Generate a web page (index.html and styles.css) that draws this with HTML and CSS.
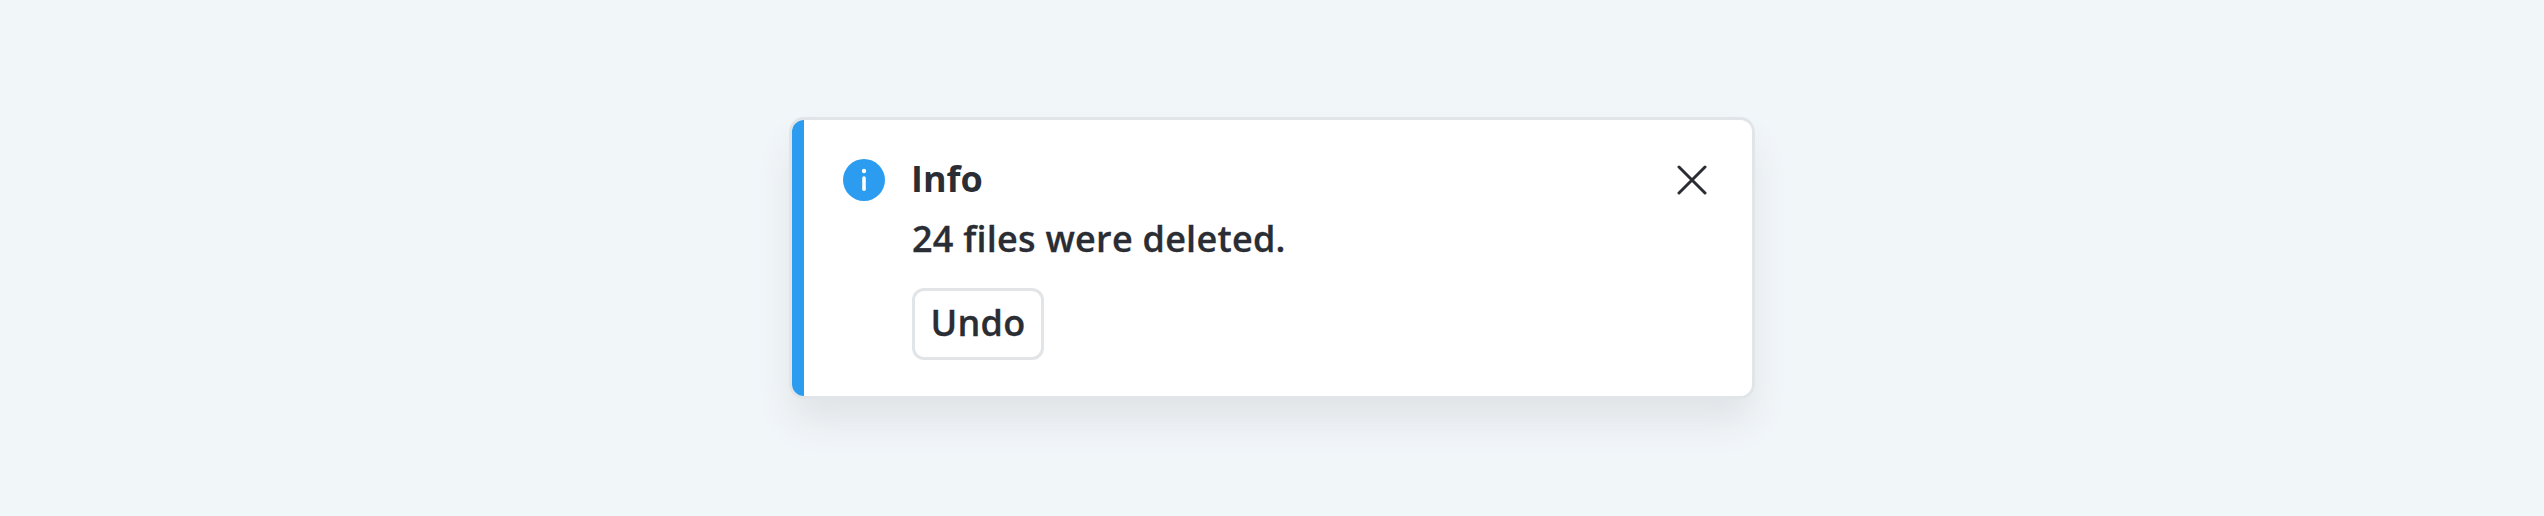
FILE: index.html
```html
<!DOCTYPE html>
<html lang="en">
<head>
<meta charset="utf-8">
<title>Info toast</title>
<link rel="stylesheet" href="styles.css">
</head>
<body>
<section class="toast" role="status">
  <svg class="toast-icon" viewBox="0 0 42 42" aria-hidden="true">
    <circle cx="21" cy="21" r="21" fill="#2c9cf0"/>
    <circle cx="21" cy="12" r="2.2" fill="#fff"/>
    <path d="M21 19V30.2" stroke="#fff" stroke-width="3.6" stroke-linecap="round"/>
  </svg>
  <div class="toast-content">
    <h1 class="toast-title">Info</h1>
    <p class="toast-message">24 files were deleted.</p>
    <button class="toast-action" type="button">Undo</button>
  </div>
  <button class="toast-close" type="button" aria-label="Close">
    <svg class="close-icon" viewBox="0 0 30 30" aria-hidden="true">
      <path d="M2 2L28 28M28 2L2 28" stroke="#2a2d34" stroke-width="3" stroke-linecap="round"/>
    </svg>
  </button>
</section>
</body>
</html>
```
FILE: styles.css
```css
* { box-sizing: border-box; }
html { overflow: hidden; }
body {
  margin: 0;
  height: 516px;
  display: flex;
  justify-content: center;
  align-items: center;
  background: #f1f6f9;
  color: #2a2d34;
  font-family: "Open Sans", sans-serif;
  font-size: 36px;
  line-height: 60px;
}
.toast {
  width: 960px;
  height: 276px;
  display: flex;
  align-items: flex-start;
  padding: 29px 45px 0 51px;
  border-radius: 12px;
  background: linear-gradient(to right, #2c9cf0 12px, #fff 12px);
  box-shadow: 0 0 0 3px #e1e5e8, 0 24px 36px #dfe3e6;
}
.toast-icon { width: 42px; height: 42px; margin: 10px 27px 0 0; flex: none; }
.toast-content { flex: 1; }
.toast-title { margin: 0 0 0 -1px; font-size: 36px; font-weight: 700; line-height: 60px; letter-spacing: 0; }
.toast-message { margin: 0; font-weight: 600; letter-spacing: 0.25px; -webkit-text-stroke: 0.3px; }
.toast-action {
  display: flex;
  align-items: center;
  justify-content: center;
  width: 132px;
  height: 72px;
  margin: 19px 0 0;
  padding: 0 0 2px;
  border: 3px solid #e1e5e8;
  border-radius: 12px;
  background: #fff;
  color: inherit;
  font: inherit;
  font-weight: 600;
  letter-spacing: 0.3px;
  -webkit-text-stroke: 0.3px;
}
.toast-close { display: flex; margin-top: 16px; padding: 0; border: 0; background: none; }
.close-icon { width: 30px; height: 30px; }
```
